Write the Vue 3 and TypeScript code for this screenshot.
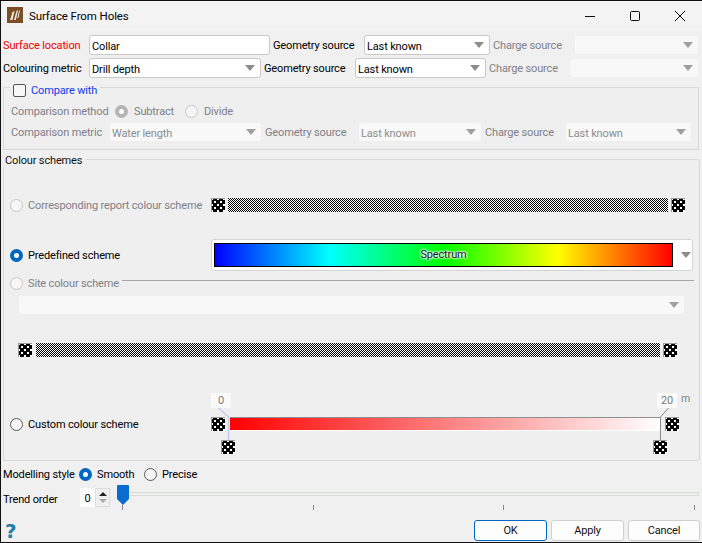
<script setup lang="ts">
const ticks: number[] = [0, 1, 2, 3]
</script>

<template>
  <div class="window">
    <header class="titlebar">
      <svg class="appicon" width="16" height="16" viewBox="0 0 16 16">
        <rect width="16" height="16" fill="#7a4f26" />
        <path d="M3 13 L5.5 5 L7.5 4 L5.5 13 Z M7 13 L9.5 4 L11 3 L8.8 13 Z M10.2 11 L12 4 L13 3 L11.4 11 Z" fill="#efe9e0" />
      </svg>
      <span class="title">Surface From Holes</span>
      <div class="controls">
        <svg width="12" height="12" viewBox="0 0 12 12"><path d="M1 6.5H11" stroke="#111" /></svg>
        <svg width="12" height="12" viewBox="0 0 12 12"><rect x="1.5" y="1.5" width="9" height="9" rx="1" fill="none" stroke="#111" /></svg>
        <svg width="12" height="12" viewBox="0 0 12 12"><path d="M1 1L11 11M11 1L1 11" stroke="#111" /></svg>
      </div>
    </header>

    <div class="grid row-a">
      <span class="t red">Surface location</span>
      <div class="combo"><span>Collar</span></div>
      <span class="t pad">Geometry source</span>
      <div class="combo arrow"><span>Last known</span></div>
      <span class="t pad muted">Charge source</span>
      <div class="combo arrow off"></div>
    </div>
    <div class="grid row-b">
      <span class="t">Colouring metric</span>
      <div class="combo arrow"><span>Drill depth</span></div>
      <span class="t pad">Geometry source</span>
      <div class="combo arrow"><span>Last known</span></div>
      <span class="t pad muted">Charge source</span>
      <div class="combo arrow off"></div>
    </div>

    <section class="group compare">
      <div class="legend legend-check">
        <span class="check"></span>
        <span class="t blue">Compare with</span>
      </div>
      <div class="method">
        <span class="t muted method-label">Comparison method</span>
        <span class="radio off on"></span>
        <span class="t muted subtract">Subtract</span>
        <span class="radio off"></span>
        <span class="t muted">Divide</span>
      </div>
      <div class="grid row-c">
        <span class="t muted">Comparison metric</span>
        <div class="combo arrow off"><span>Water length</span></div>
        <span class="t pad muted">Geometry source</span>
        <div class="combo arrow off"><span>Last known</span></div>
        <span class="t pad muted">Charge source</span>
        <div class="combo arrow off"><span>Last known</span></div>
      </div>
    </section>

    <section class="group schemes">
      <div class="legend legend-schemes">Colour schemes</div>

      <div class="scheme report">
        <label class="choice muted"><span class="radio off"></span><span class="t">Corresponding report colour scheme</span></label>
        <span class="swatch"></span>
        <svg class="checker report-bar" width="440" height="14">
          <defs>
            <pattern id="checks-a" width="2" height="2" patternUnits="userSpaceOnUse">
              <rect width="2" height="2" fill="#fff" />
              <rect width="1" height="1" fill="#000" />
              <rect x="1" y="1" width="1" height="1" fill="#000" />
            </pattern>
          </defs>
          <rect width="440" height="14" fill="url(#checks-a)" shape-rendering="crispEdges" />
        </svg>
        <span class="swatch"></span>
      </div>

      <div class="scheme predefined">
        <label class="choice"><span class="radio on"></span><span class="t">Predefined scheme</span></label>
        <div class="spectrum-combo">
          <div class="spectrum"><span class="spectrum-name">Spectrum</span></div>
          <i class="tri"></i>
        </div>
      </div>

      <div class="site">
        <label class="site-choice muted"><span class="radio off"></span><span class="t">Site colour scheme</span></label>
        <span class="site-line"></span>
      </div>
      <div class="combo arrow off site-combo"></div>

      <div class="site-bar">
        <span class="swatch"></span>
        <svg class="checker wide-bar" width="624" height="14">
          <defs>
            <pattern id="checks-b" width="2" height="2" patternUnits="userSpaceOnUse">
              <rect width="2" height="2" fill="#fff" />
              <rect width="1" height="1" fill="#000" />
              <rect x="1" y="1" width="1" height="1" fill="#000" />
            </pattern>
          </defs>
          <rect width="624" height="14" fill="url(#checks-b)" shape-rendering="crispEdges" />
        </svg>
        <span class="swatch"></span>
      </div>

      <div class="custom">
        <label class="choice custom-choice"><span class="radio"></span><span class="t">Custom colour scheme</span></label>
        <div class="range">
          <svg class="connectors" width="468" height="61" viewBox="0 0 468 61">
            <path d="M7.5 15 L17.5 24 V47" fill="none" stroke="#c8c8f0" stroke-width="1.5" />
            <path d="M457.5 15 L449.5 24 V47" fill="none" stroke="#8a8a8a" />
          </svg>
          <span class="stop-label low">0</span>
          <span class="stop-label high">20</span>
          <span class="unit">m</span>
          <span class="swatch"></span>
          <span class="ramp"></span>
          <span class="swatch"></span>
          <span class="swatch handle-low"></span>
          <span class="swatch handle-high"></span>
        </div>
      </div>
    </section>

    <div class="modelling">
      <span class="t modelling-label">Modelling style</span>
      <span class="radio on"></span>
      <span class="t smooth">Smooth</span>
      <span class="radio"></span>
      <span class="t">Precise</span>
    </div>

    <div class="trend">
      <span class="trend-label">Trend order</span>
      <div class="spin">
        <span class="spin-value">0</span>
        <div class="spin-buttons">
          <i class="up"></i>
          <i class="down"></i>
        </div>
      </div>
      <div class="slider">
        <div class="groove"></div>
        <svg class="thumb" width="12" height="20" viewBox="0 0 12 20">
          <path d="M1 0H11Q12 0 12 1V14L6 20L0 14V1Q0 0 1 0Z" fill="#0a6cd0" />
        </svg>
        <div class="ticks"><i v-for="t in ticks" :key="t"></i></div>
      </div>
    </div>

    <footer class="footer">
      <span class="help">?</span>
      <div class="buttons">
        <button class="btn primary">OK</button>
        <button class="btn">Apply</button>
        <button class="btn cancel">Cancel</button>
      </div>
    </footer>
  </div>
</template>

<style>
html, body { margin: 0; padding: 0; overflow: hidden; background: #f0f0f0; }
</style>

<style scoped>
.window {
  box-sizing: border-box;
  width: 702px;
  height: 543px;
  border-left: 1px solid #111;
  border-top: 1px solid #111;
  border-bottom: 1px solid #111;
  background: #f0f0f0;
  color: #000;
  font: 11px/14px Roboto, "Noto Sans", sans-serif;
  letter-spacing: -0.15px;
  overflow: hidden;
}
.t { padding-top: 2px; white-space: nowrap; }
.titlebar {
  display: flex;
  align-items: center;
  height: 30px;
  background: #f3f3f3;
  padding-left: 6px;
}
.appicon { margin: 0 6px 2px 0; }
.title { font-size: 11.5px; letter-spacing: -0.1px; }
.controls {
  margin-left: auto;
  display: flex;
  gap: 33px;
  padding-right: 16px;
}
.grid { display: grid; align-items: center; height: 20px; }
.row-a { margin: 4px 0 0 2px; grid-template-columns: 86px 181px 94px 126px 84px 125px; }
.row-b { margin: 3px 0 0 2px; grid-template-columns: 86px 172px 94px 131px 83px 130px; }
.row-c { margin: 1px 0 0 7px; grid-template-columns: 98px 153px 96px 124px 83px 127px; }
.pad { padding-left: 3px; }
.red { color: #f00000; }
.blue { color: #0a3cf0; }
.muted { color: #808088; }
.combo {
  box-sizing: border-box;
  height: 20px;
  display: flex;
  align-items: center;
  justify-content: space-between;
  padding: 3px 5px 0 2px;
  background: #fff;
  border: 1px solid #c8c8c8;
  border-radius: 3px;
  color: #000;
}
.combo.arrow::after, .tri {
  content: "";
  display: block;
  margin-left: auto;
  width: 0;
  height: 0;
  border-left: 5px solid transparent;
  border-right: 5px solid transparent;
  border-top: 6px solid #8c8c8c;
}
.combo.arrow::after { margin-top: -3px; }
.combo.off { background: #f8f8f8; border-color: #efefef; color: #8c8c8c; }
.combo.off.arrow::after { border-top-color: #a0a0a0; }
.group { box-sizing: border-box; border: 1px solid #d9d9d9; background: #efefef; margin-left: 2px; }
.compare { margin-top: 9px; width: 696px; height: 63px; padding-left: 0; }
.legend { background: #f0f0f0; width: max-content; }
.legend-check {
  display: flex;
  align-items: center;
  height: 14px;
  margin: -5px 0 0 6px;
  padding: 0 3px;
  gap: 5px;
}
.check {
  box-sizing: border-box;
  width: 13px;
  height: 13px;
  background: #f6f6f6;
  border: 1px solid #555;
  border-radius: 2px;
}
.method { display: flex; align-items: center; height: 20px; margin: 4px 0 0 7px; }
.method-label { width: 104px; }
.method .radio { margin-right: 6px; }
.subtract { width: 51px; }
.radio {
  box-sizing: border-box;
  flex: none;
  width: 13px;
  height: 13px;
  margin-right: 5px;
  border-radius: 50%;
  border: 1px solid #5a5a5a;
  background: #f6f6f6;
}
.radio.on { border: 4px solid #0067c0; background: #fff; }
.radio.off { border: 1px solid #c6c6c6; background: #f6f6f6; }
.radio.off.on { border: 4px solid #b4b4b4; background: #fff; }
.schemes { margin-top: 9px; width: 697px; height: 302px; border-radius: 0 3px 3px 0; }
.legend-schemes { margin: -7px 0 0 -1px; padding: 0 4px 0 2px; height: 14px; line-height: 16px; color: #111; }
.scheme { display: flex; align-items: center; margin-left: 6px; }
.choice { display: flex; align-items: center; flex: none; width: 201px; white-space: nowrap; }
.report { margin-top: 31px; height: 14px; }
.swatch {
  display: block;
  flex: none;
  box-sizing: border-box;
  width: 14px;
  height: 14px;
  border-top: 1px solid #999;
  border-left: 1px solid #999;
  background-color: #000;
  background-image:
    radial-gradient(circle, #fff 1.1px, transparent 1.6px),
    radial-gradient(circle, #fff 1.1px, transparent 1.6px);
  background-size: 6px 6px;
  background-position: 0 0, 3px 3px;
}
.checker { display: block; flex: none; }
.report-bar { margin: 0 3px; }
.predefined { margin-top: 27px; height: 32px; }
.spectrum-combo {
  box-sizing: border-box;
  display: flex;
  align-items: center;
  width: 482px;
  height: 32px;
  padding: 0 1px 0 2px;
  background: #fff;
  border: 1px solid #d4d4d4;
  border-radius: 3px;
}
.spectrum {
  box-sizing: border-box;
  width: 459px;
  height: 24px;
  border: 1px solid #000;
  display: flex;
  align-items: center;
  justify-content: center;
  background: linear-gradient(90deg, #0000ff, #00ffff 25%, #00ff00 50%, #ffff00 75%, #ff0000);
}
.spectrum-name { text-shadow: 0 0 2px #fff, 0 0 2px #fff, 0 0 2px #fff, 0 0 3px #fff; color: #111; }
.site { display: flex; align-items: center; height: 14px; margin: 5px 5px 0 6px; }
.site-choice { display: flex; align-items: center; white-space: nowrap; padding-right: 3px; }
.site-line { flex: 1; height: 1px; background: #a8a8a8; margin-top: -6px; }
.site-combo { width: 667px; margin: 5px 0 0 14px; }
.site-bar { display: flex; align-items: center; height: 14px; margin: 28px 0 0 14px; }
.wide-bar { margin: 0 3px 0 4px; }
.custom { display: flex; align-items: flex-start; margin: 36px 0 0 6px; }
.custom-choice { margin-top: 24px; height: 14px; }
.range { position: relative; display: flex; width: 468px; height: 61px; padding-top: 24px; box-sizing: border-box; }
.connectors { position: absolute; left: 0; top: 0; pointer-events: none; }
.stop-label {
  position: absolute;
  top: 0;
  width: 20px;
  height: 15px;
  line-height: 16px;
  background: #fafafa;
  color: #7a7a7a;
  text-align: center;
}
.low { left: 0; }
.high { left: 446px; }
.unit { position: absolute; left: 470px; top: -1px; color: #808088; font-size: 10.5px; }
.ramp {
  display: block;
  box-sizing: border-box;
  width: 430px;
  height: 14px;
  margin: 0 5px;
  border-top: 1px solid #8e8e8e;
  border-bottom: 1px solid #fff;
  background: linear-gradient(90deg, #ff0000, #ffffff);
}
.handle-low { position: absolute; left: 10px; top: 47px; }
.handle-high { position: absolute; left: 442px; top: 47px; }
.modelling { display: flex; align-items: center; height: 20px; margin: 3px 0 0 2px; }
.modelling-label { width: 76px; }
.smooth { width: 47px; }
.trend { display: flex; margin: 1px 0 0 2px; height: 26px; }
.trend-label { width: 77px; margin-top: 8px; }
.spin {
  box-sizing: border-box;
  display: flex;
  width: 30px;
  height: 19px;
  margin-top: 3px;
  background: #fff;
}
.spin-value { width: 15px; line-height: 22px; text-align: center; color: #000; }
.spin-buttons {
  flex: 1;
  display: flex;
  flex-direction: column;
  align-items: center;
  justify-content: center;
  gap: 3px;
  background: #f0f0f0;
  border: 1px solid #dcdcdc;
}
.up, .down { display: block; width: 0; height: 0; border-left: 4px solid transparent; border-right: 4px solid transparent; }
.up { border-bottom: 4px solid #222; }
.down { border-top: 4px solid #a8a8a8; }
.slider { position: relative; margin-left: 7px; width: 582px; height: 26px; }
.groove {
  box-sizing: border-box;
  height: 4px;
  margin-top: 7px;
  background: #eef0ee;
  border: 1px solid #d8dcd8;
}
.thumb { position: absolute; left: 0; top: 0; }
.ticks { display: flex; justify-content: space-between; padding: 9px 4px 0 5px; }
.ticks i { display: block; width: 1px; height: 5px; background: #888; }
.footer { display: flex; align-items: center; height: 21px; margin: 9px 0 0 0; }
.help {
  font: bold 20px/20px "DejaVu Sans", sans-serif;
  color: #1f7ea8;
  margin-left: 4px;
}
.buttons { display: flex; gap: 4px; margin-left: auto; padding-right: 2px; }
.btn {
  box-sizing: border-box;
  width: 73px;
  height: 21px;
  padding: 0;
  background: #fdfdfd;
  border: 1px solid #d0d0d0;
  border-radius: 3px;
  color: #111;
  font: inherit;
  letter-spacing: inherit;
}
.cancel { width: 72px; }
.primary { border: 1.5px solid #0067c0; }
</style>
